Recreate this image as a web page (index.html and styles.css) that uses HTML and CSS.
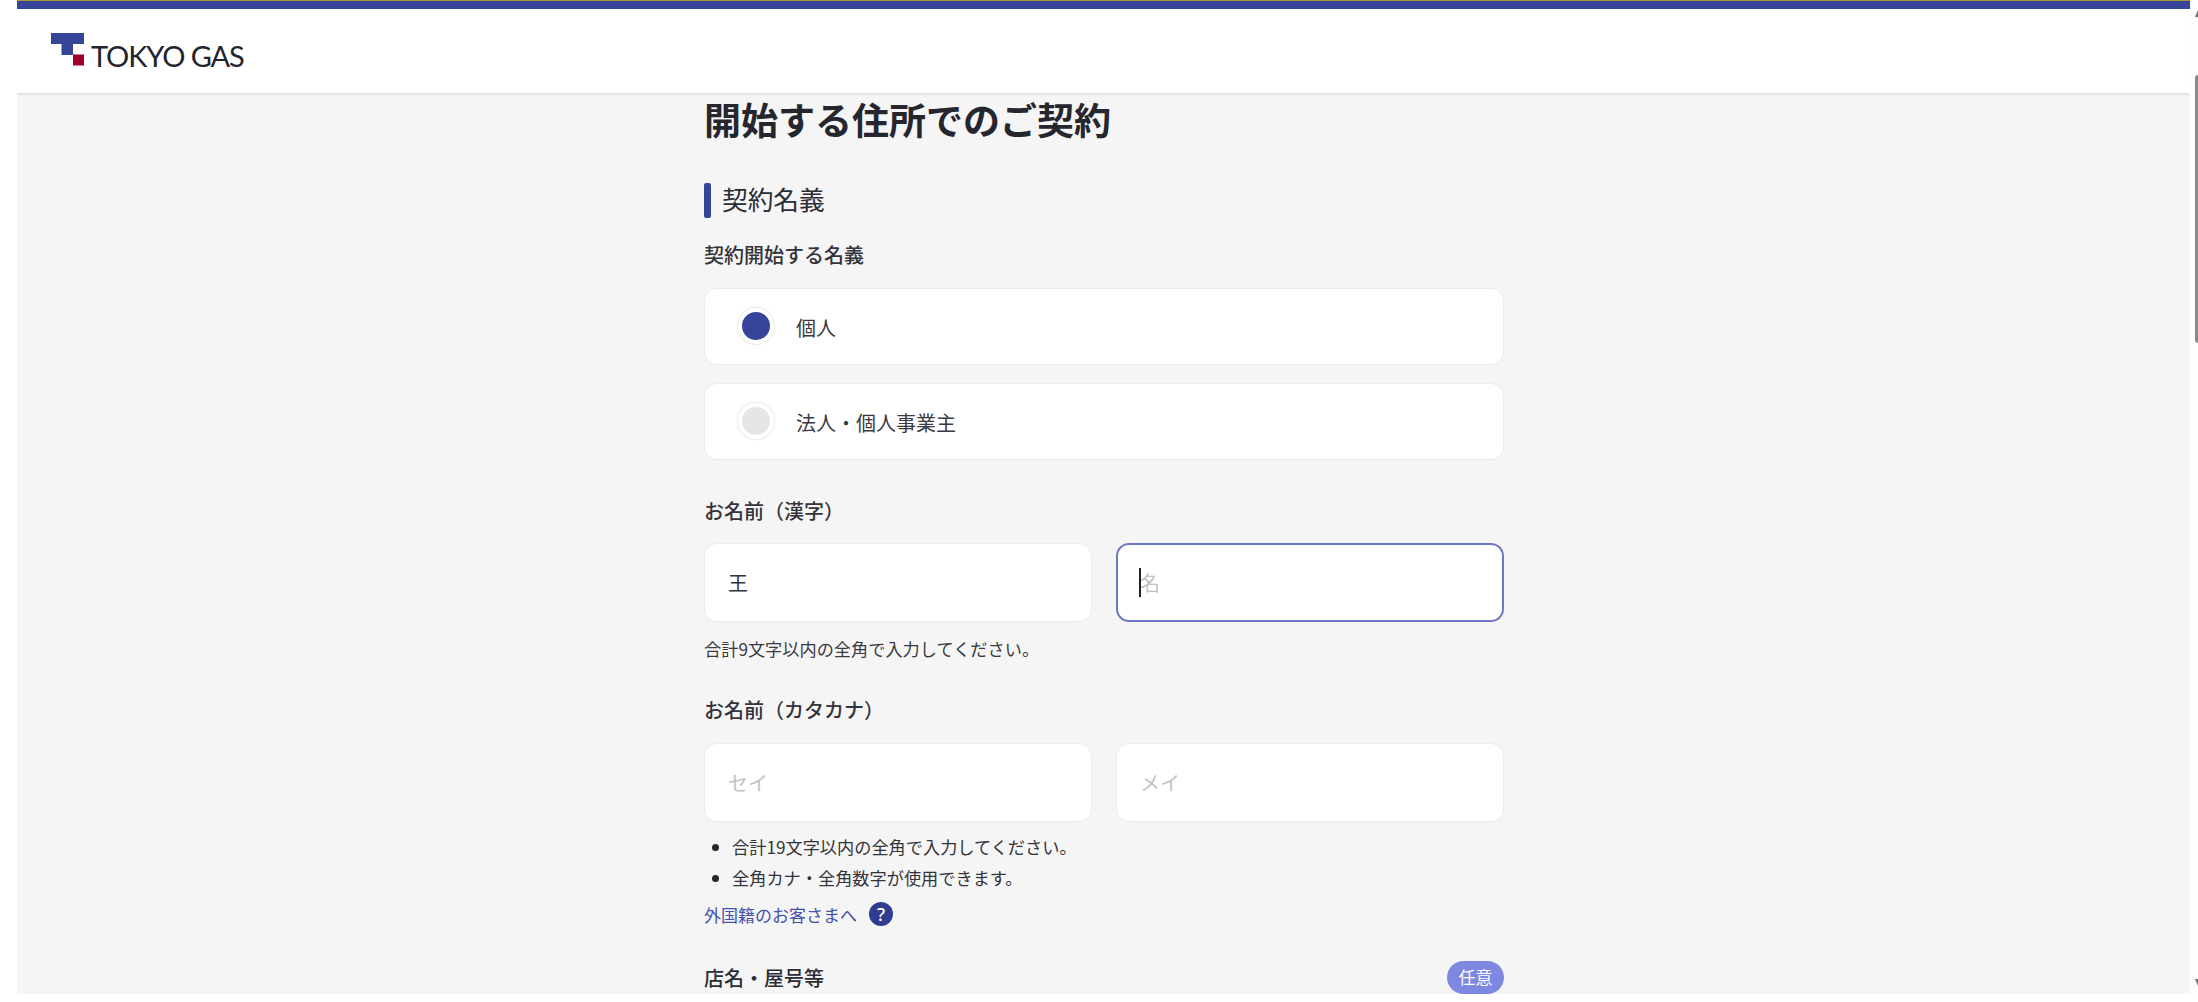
FILE: index.html
```html
<!DOCTYPE html>
<html lang="ja">
<head>
<meta charset="utf-8">
<title>開始する住所でのご契約</title>
<link rel="stylesheet" href="styles.css">
</head>
<body>
<div class="window">
  <div class="page">
    <header class="site-header">
      <a class="logo" href="#">
        <svg class="logo-mark" width="33" height="33" viewBox="0 0 33 33" aria-hidden="true">
          <path d="M0 0H33V11H22V22H10.500V11H0Z" fill="#36459a"/>
          <rect x="22" y="21.500" width="11" height="11" fill="#a4002f"/>
        </svg>
        <span class="logo-text">TOKYO GAS</span>
      </a>
    </header>
    <main class="content">
      <h1 class="page-title">開始する住所でのご契約</h1>
      <h2 class="section-title">契約名義</h2>

      <p class="label label-first">契約開始する名義</p>
      <div class="radio-list">
        <label class="radio-card"><span class="radio radio-on"></span><span>個人</span></label>
        <label class="radio-card"><span class="radio"></span><span>法人・個人事業主</span></label>
      </div>

      <p class="label label-kanji">お名前（漢字）</p>
      <div class="input-row">
        <input class="text-input" type="text" value="王" aria-label="姓">
        <span class="input-wrap">
          <input class="text-input text-input-focus" type="text" placeholder="名" aria-label="名">
          <span class="caret"></span>
        </span>
      </div>
      <p class="hint">合計9文字以内の全角で入力してください。</p>

      <p class="label label-kana">お名前（カタカナ）</p>
      <div class="input-row input-row-kana">
        <input class="text-input" type="text" placeholder="セイ" aria-label="セイ">
        <input class="text-input" type="text" placeholder="メイ" aria-label="メイ">
      </div>
      <ul class="notes">
        <li>合計19文字以内の全角で入力してください。</li>
        <li>全角カナ・全角数字が使用できます。</li>
      </ul>
      <a class="help-link" href="#">外国籍のお客さまへ<span class="help-icon">?</span></a>

      <div class="label-row">
        <span class="label-strong">店名・屋号等</span>
        <span class="badge">任意</span>
      </div>
    </main>
  </div>
  <div class="scrollbar" aria-hidden="true">
    <span class="arrow arrow-up"></span>
    <span class="thumb"></span>
    <span class="arrow arrow-down"></span>
  </div>
</div>
</body>
</html>
```
FILE: styles.css
```css
* { box-sizing: border-box; }
html, body { margin: 0; height: 100%; overflow: hidden; background: #fff; }
body {
  font-family: "Noto Sans CJK JP", "Noto Sans", sans-serif;
  color: #2c2c34;
}
.window {
  display: flex;
  height: 994px;
  padding-left: 17px;
  overflow: hidden;
}
.page {
  flex: 1;
  min-width: 0;
  background: #f5f5f5;
  overflow: hidden;
}
.site-header {
  height: 93px;
  background: #fff;
  border-top: 1px solid #a89a2e;
  box-shadow: 0 1px 3px rgba(0, 0, 0, .14);
  padding: 32px 0 0 34px;
  position: relative;
}
.site-header::before {
  content: "";
  position: absolute;
  left: 0;
  right: 0;
  top: 0;
  height: 8px;
  background: #36459a;
}
.logo {
  display: flex;
  align-items: flex-start;
  color: #22242e;
  text-decoration: none;
}
.logo-mark { flex: none; }
.logo-text {
  font-family: "Lato", sans-serif;
  font-weight: 400;
  font-size: 29px;
  line-height: 34px;
  margin: 6px 0 0 7px;
  letter-spacing: -1.100px;
  white-space: nowrap;
}
.content {
  width: 800px;
  margin-left: 687px;
}
.page-title {
  margin: 0;
  font-size: 37px;
  line-height: 52px;
  font-weight: 700;
  color: #26262e;
}
.section-title {
  margin: 38px 0 0;
  padding-left: 18px;
  font-size: 25.700px;
  line-height: 31px;
  font-weight: 400;
  color: #2c2c34;
  height: 35px;
  position: relative;
}
.section-title::before {
  content: "";
  position: absolute;
  left: 0;
  top: 0;
  width: 7px;
  height: 35px;
  border-radius: 2px;
  background: #36459a;
}
.label {
  margin: 0;
  font-size: 20px;
  line-height: 28px;
  font-weight: 500;
  color: #33333a;
}
.label-first { margin-top: 23px; }
.label-kanji { margin-top: 37px; }
.label-kana { margin-top: 34px; }
.radio-list {
  display: flex;
  flex-direction: column;
  gap: 18px;
  margin-top: 19px;
}
.radio-card {
  display: flex;
  align-items: center;
  gap: 22px;
  height: 77px;
  padding: 2px 0 0 33px;
  background: #fff;
  border: 1px solid #ececec;
  border-radius: 13px;
  font-size: 20px;
  color: #3a3a40;
}
.radio {
  flex: none;
  width: 36px;
  height: 36px;
  margin-top: -4px;
  border: 4px solid #fff;
  border-radius: 50%;
  background: #e6e6e6;
  box-shadow: 0 0 0 1px #ededed, 0 0 3px rgba(0, 0, 0, .12);
}
.radio-on { background: #36459a; }
.input-row {
  display: grid;
  grid-template-columns: repeat(2, minmax(0, 1fr));
  gap: 24px;
  margin-top: 18px;
}
.input-row-kana { margin-top: 19px; }
.input-wrap {
  display: block;
  min-width: 0;
  position: relative;
}
.text-input {
  display: block;
  width: 100%;
  height: 79px;
  padding: 0 23px;
  background: #fff;
  border: 1px solid #ececec;
  border-radius: 13px;
  font: 400 20px "Noto Sans CJK JP", sans-serif;
  color: #33333a;
  outline: none;
}
.text-input::placeholder { color: #c2c2c2; opacity: 1; }
.text-input-focus { border: 2px solid #6f78c4; padding: 0 22px; }
.caret {
  position: absolute;
  left: 23px;
  top: 25px;
  width: 2px;
  height: 29px;
  background: #1d1d24;
}
.hint {
  margin: 14px 0 0;
  font-size: 17.200px;
  line-height: 26px;
  color: #3a3a40;
}
.notes {
  list-style: none;
  margin: 10px 0 0;
  padding: 0 0 0 28px;
  font-size: 17.200px;
  line-height: 30.500px;
  color: #33333a;
}
.notes li { position: relative; }
.notes li::before {
  content: "";
  position: absolute;
  left: -20px;
  top: 12px;
  width: 7px;
  height: 7px;
  border-radius: 50%;
  background: #26262e;
}
.help-link {
  display: flex;
  align-items: center;
  margin-top: 6px;
  height: 30px;
  font-size: 17px;
  color: #4652a8;
  text-decoration: none;
}
.help-icon {
  width: 24px;
  height: 24px;
  margin-left: 12px;
  border-radius: 50%;
  background: #2f3d90;
  color: #fff;
  font: 500 18px/24px "Noto Sans", sans-serif;
  text-align: center;
}
.label-row {
  display: flex;
  justify-content: space-between;
  align-items: center;
  margin-top: 32px;
  height: 33px;
}
.label-strong {
  font-size: 20px;
  font-weight: 500;
  color: #2c2c34;
}
.badge {
  width: 57px;
  height: 33px;
  border-radius: 17px;
  background: #7f88e0;
  color: #fff;
  font-size: 17px;
  line-height: 32px;
  text-align: center;
}
.scrollbar {
  flex: none;
  width: 8px;
  height: 1002px;
  background: #fdfdfd;
  display: flex;
  flex-direction: column;
  align-items: flex-end;
  padding: 10px 0 16px;
  position: relative;
}
.arrow {
  width: 0;
  height: 0;
  border-style: solid;
}
.arrow-up {
  border-width: 0 0 7px 3px;
  border-color: transparent transparent #707070 transparent;
}
.thumb {
  width: 3px;
  height: 268px;
  margin-top: 58px;
  border-radius: 3px 0 0 3px;
  background: #8a8a8a;
}
.arrow-down {
  margin-top: auto;
  border-width: 7px 0 0 3px;
  border-color: #707070 transparent transparent transparent;
}
```
